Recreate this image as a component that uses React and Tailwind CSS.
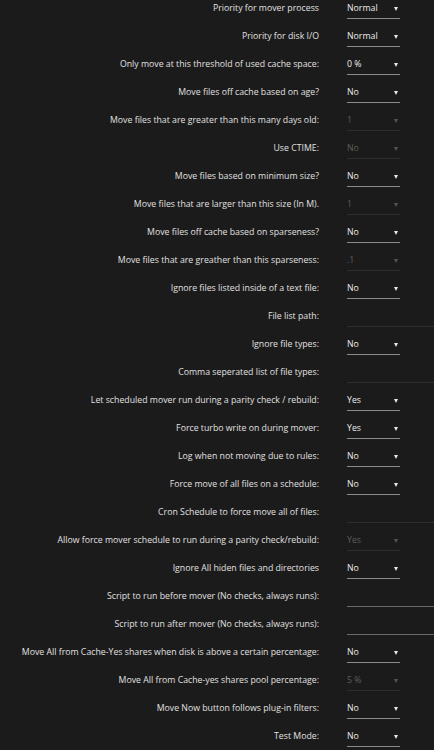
const rows = [
  { label: 'Priority for mover process', type: 'select', value: 'Normal' },
  { label: 'Priority for disk I/O', type: 'select', value: 'Normal' },
  { label: 'Only move at this threshold of used cache space:', type: 'select', value: '0 %' },
  { label: 'Move files off cache based on age?', type: 'select', value: 'No' },
  { label: 'Move files that are greater than this many days old:', type: 'select', value: '1', disabled: true },
  { label: 'Use CTIME:', type: 'select', value: 'No', disabled: true },
  { label: 'Move files based on minimum size?', type: 'select', value: 'No' },
  { label: 'Move files that are larger than this size (In M).', type: 'select', value: '1', disabled: true },
  { label: 'Move files off cache based on sparseness?', type: 'select', value: 'No' },
  { label: 'Move files that are greather than this sparseness:', type: 'select', value: '.1', disabled: true },
  { label: 'Ignore files listed inside of a text file:', type: 'select', value: 'No' },
  { label: 'File list path:', type: 'text', disabled: true },
  { label: 'Ignore file types:', type: 'select', value: 'No' },
  { label: 'Comma seperated list of file types:', type: 'text', disabled: true },
  { label: 'Let scheduled mover run during a parity check / rebuild:', type: 'select', value: 'Yes' },
  { label: 'Force turbo write on during mover:', type: 'select', value: 'Yes' },
  { label: 'Log when not moving due to rules:', type: 'select', value: 'No' },
  { label: 'Force move of all files on a schedule:', type: 'select', value: 'No' },
  { label: 'Cron Schedule to force move all of files:', type: 'text', disabled: true },
  { label: 'Allow force mover schedule to run during a parity check/rebuild:', type: 'select', value: 'Yes', disabled: true },
  { label: 'Ignore All hiden files and directories', type: 'select', value: 'No' },
  { label: 'Script to run before mover (No checks, always runs):', type: 'text' },
  { label: 'Script to run after mover (No checks, always runs):', type: 'text' },
  { label: 'Move All from Cache-Yes shares when disk is above a certain percentage:', type: 'select', value: 'No' },
  { label: 'Move All from Cache-yes shares pool percentage:', type: 'select', value: '5 %', disabled: true },
  { label: 'Move Now button follows plug-in filters:', type: 'select', value: 'No' },
  { label: 'Test Mode:', type: 'select', value: 'No' },
];

function Select({ value, disabled }) {
  return (
    <div
      className={`relative flex h-5 w-[53px] items-center border-b ${
        disabled ? 'border-[#2e2e2e] text-[#5e5e5e]' : 'border-[#8a8a8a] text-[#ececec]'
      }`}
    >
      <span>{value}</span>
      <span
        className={`absolute right-[2px] top-[8px] h-0 w-0 border-x-[2.5px] border-t-[4px] border-x-transparent ${
          disabled ? 'border-t-[#555]' : 'border-t-[#e8e8e8]'
        }`}
      />
    </div>
  );
}

function TextField({ disabled }) {
  return (
    <div
      className={`h-5 w-[300px] border-b ${disabled ? 'border-[#2e2e2e]' : 'border-[#6a6a6a]'}`}
    />
  );
}

export default function App() {
  return (
    <div className="h-[750px] w-full overflow-hidden bg-[#1c1b1b] font-['Open_Sans',sans-serif] text-[8.75px] text-[#e0e0e0]">
      <div className="-mt-[5px] flex flex-col">
        {rows.map((row) => (
          <div key={row.label} className="flex h-[28px] items-center">
            <div className="w-[319px] shrink-0 whitespace-nowrap text-right">{row.label}</div>
            <div className="ml-[28px] shrink-0">
              {row.type === 'select' ? (
                <Select value={row.value} disabled={row.disabled} />
              ) : (
                <TextField disabled={row.disabled} />
              )}
            </div>
          </div>
        ))}
      </div>
    </div>
  );
}
